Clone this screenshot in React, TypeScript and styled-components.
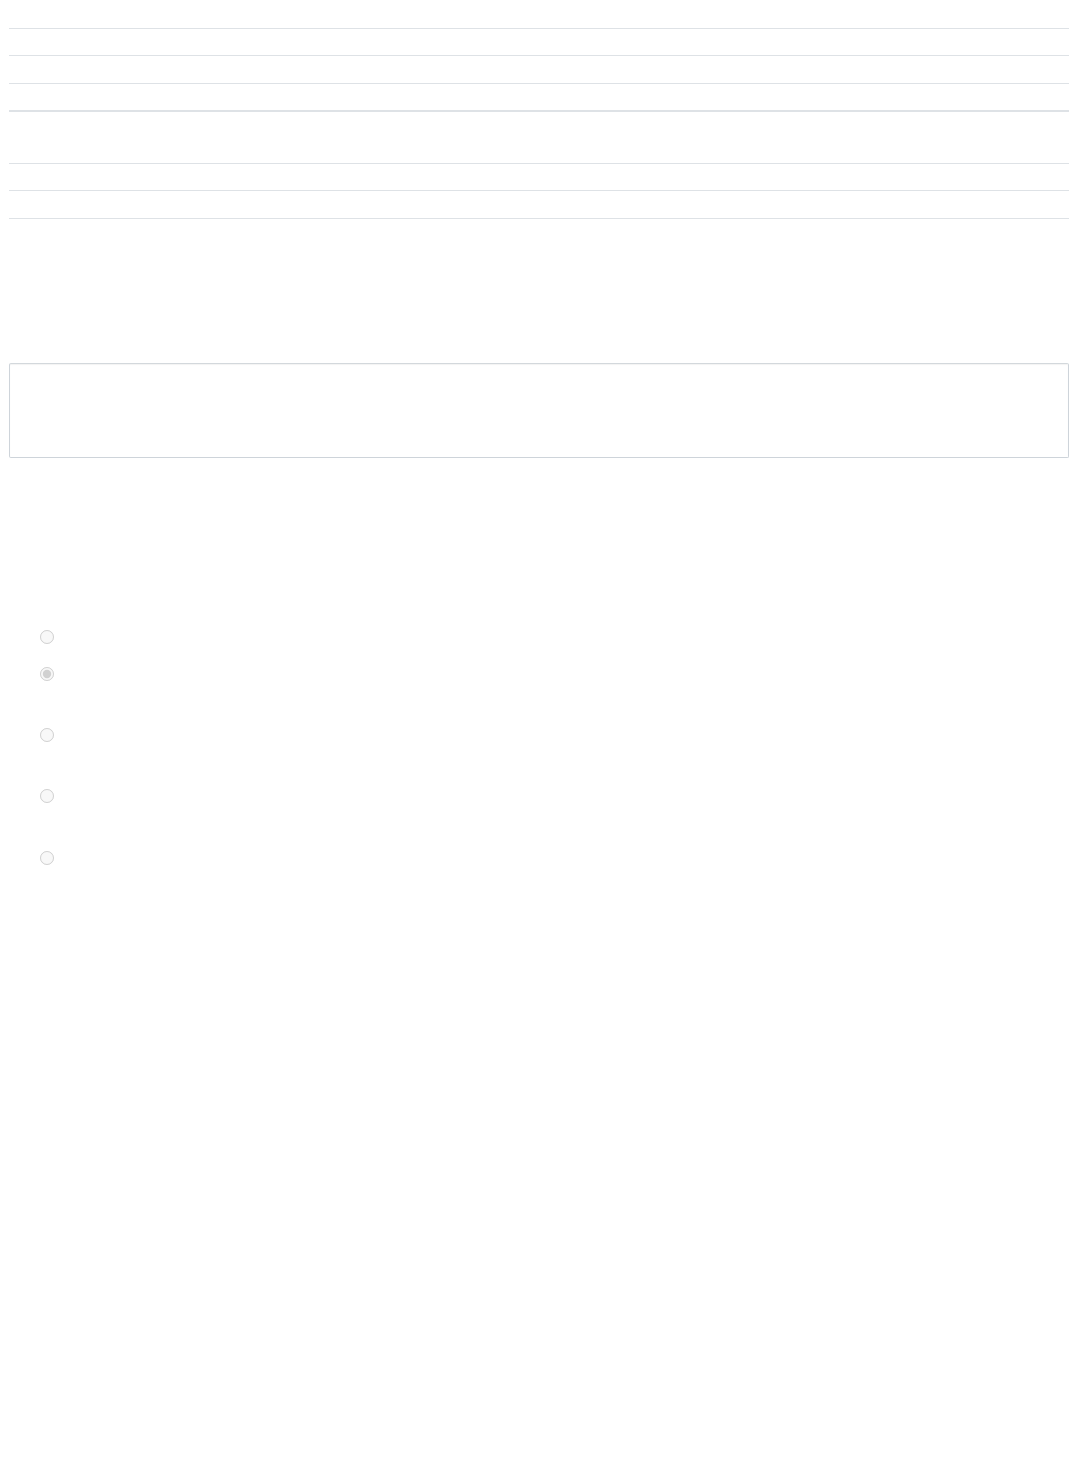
import React from "react";
import styled, { createGlobalStyle } from "styled-components";

const GlobalStyle = createGlobalStyle`
  html, body {
    margin: 0;
    padding: 0;
    background: #ffffff;
  }
  body {
    font-family: "Liberation Sans", Arial, sans-serif;
    font-size: 14px;
    color: #ffffff;
  }
`;

const Page = styled.div`
  padding: 0 9px;
  min-height: 1482px;
  box-sizing: border-box;
`;

const Table = styled.div<{ $mt?: number }>`
  display: flex;
  flex-direction: column;
  margin-top: ${({ $mt }) => $mt || 0}px;
`;

const Row = styled.div<{ $h: number; $line?: boolean }>`
  height: ${({ $h }) => $h}px;
  box-sizing: border-box;
  border-top: ${({ $line }) => ($line ? "1px solid #dee2e6" : "none")};
`;

const HeadRule = styled.div`
  height: 2px;
  background: #dee2e6;
`;

const NoteBox = styled.div`
  margin-top: 144px;
  height: 95px;
  box-sizing: border-box;
  border: 1px solid #ced4da;
  border-top-color: #d3d8dc;
  border-radius: 2px;
  box-shadow: inset 0 1px 1px rgba(0, 0, 0, 0.05);
`;

const Choices = styled.div`
  margin-top: 172px;
  padding-left: 31px;
  display: flex;
  flex-direction: column;
`;

const Choice = styled.label<{ $h: number }>`
  display: flex;
  align-items: flex-start;
  height: ${({ $h }) => $h}px;
`;

const Radio = styled.input`
  width: 14px;
  height: 14px;
  margin: 0;
  flex: none;
`;

const choiceHeights = [37, 61, 61, 62, 20];

export default function App() {
  return (
    <>
      <GlobalStyle />
      <Page>
        <Table>
          <Row $h={28} />
          <Row $h={27} $line />
          <Row $h={28} $line />
          <Row $h={27} $line />
          <HeadRule />
        </Table>
        <Table $mt={51}>
          <Row $h={27} $line />
          <Row $h={28} $line />
          <Row $h={1} $line />
        </Table>
        <NoteBox />
        <Choices>
          {choiceHeights.map((h, i) => (
            <Choice key={i} $h={h}>
              <Radio type="radio" name="choice" disabled defaultChecked={i === 1} />
            </Choice>
          ))}
        </Choices>
      </Page>
    </>
  );
}
